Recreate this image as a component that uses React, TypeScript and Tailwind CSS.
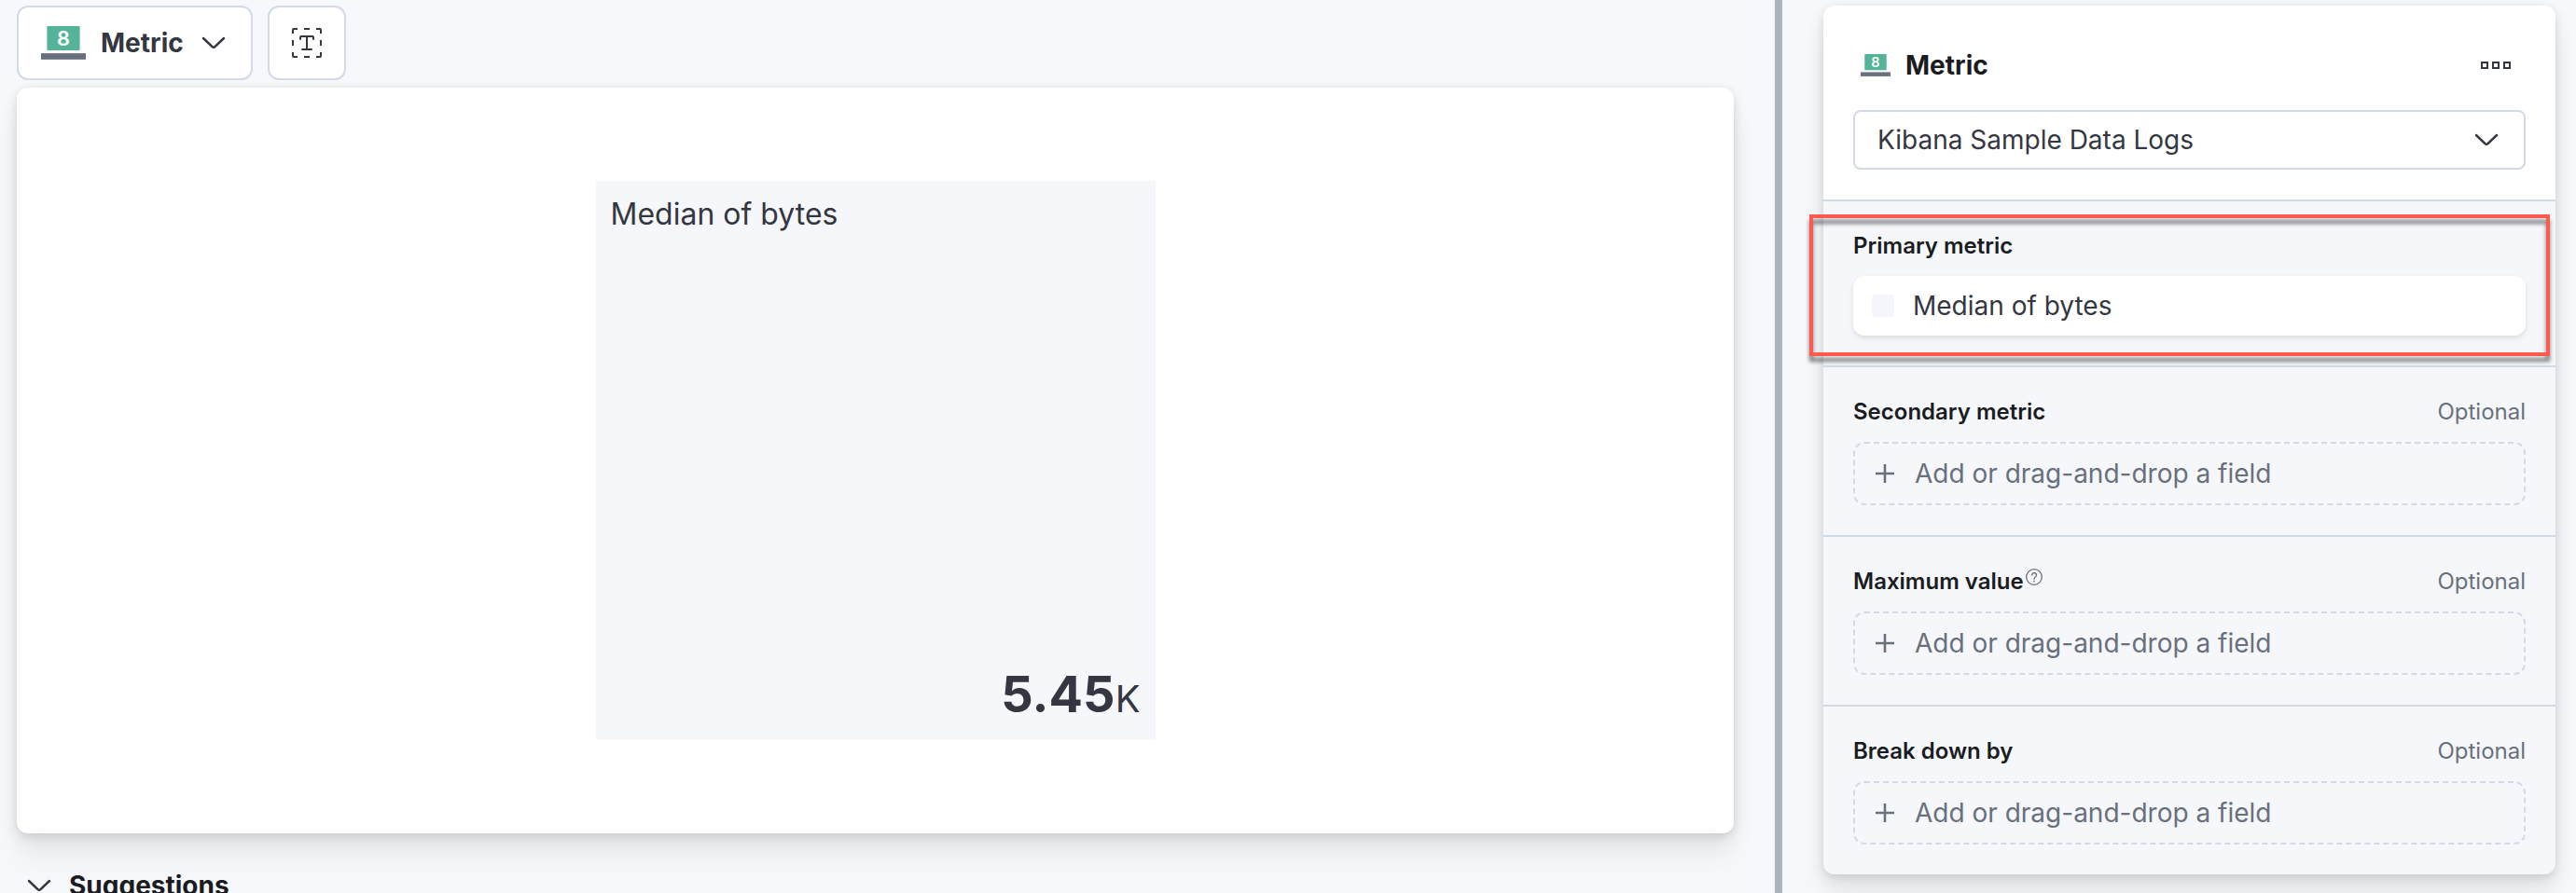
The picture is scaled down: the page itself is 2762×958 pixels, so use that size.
import React from 'react';

interface Dimension {
  title: string;
  field?: string;
  optional?: boolean;
  help?: boolean;
  highlighted?: boolean;
}

const dimensions: Dimension[] = [
  { title: 'Primary metric', field: 'Median of bytes', highlighted: true },
  { title: 'Secondary metric', optional: true },
  { title: 'Maximum value', optional: true, help: true },
  { title: 'Break down by', optional: true },
];

const PANEL_SHADOW =
  'shadow-[0_2px_8px_rgba(0,0,0,0.08),0_5px_16px_rgba(0,0,0,0.06),0_11px_24px_rgba(0,0,0,0.05),0_30px_30px_rgba(0,0,0,0.04)]';

function MetricIcon({ className }: { className: string }) {
  return (
    <svg viewBox="0 0 30 22.5" className={className} aria-hidden="true">
      <rect x="4" y="0" width="22" height="16.2" rx="0.4" fill="#54b399" />
      <rect x="0" y="18.2" width="30" height="4.2" fill="#69707d" />
      <text
        x="15"
        y="13"
        textAnchor="middle"
        fontFamily="Inter, sans-serif"
        fontSize="13.6"
        fontWeight="600"
        fill="#ffffff"
      >
        8
      </text>
    </svg>
  );
}

function ChevronIcon({ className = '' }: { className?: string }) {
  return (
    <svg
      viewBox="0 0 32 32"
      className={`size-8 shrink-0 ${className}`}
      fill="none"
      stroke="#343741"
      strokeWidth="2.5"
      strokeLinecap="round"
      strokeLinejoin="round"
      aria-hidden="true"
    >
      <path d="M5 11 L14.8 20.4 Q16 21.4 17.2 20.4 L27 11" />
    </svg>
  );
}

function TextSettingsIcon() {
  return (
    <svg viewBox="0 0 32 32" className="size-8" fill="none" stroke="#343741" strokeWidth="2" aria-hidden="true">
      <path d="M1 6V2a1 1 0 0 1 1-1h4M13 1h6M26 1h4a1 1 0 0 1 1 1v4M31 13v6M31 26v4a1 1 0 0 1-1 1h-4M19 31h-6M6 31H2a1 1 0 0 1-1-1v-4M1 19v-6" />
      <path d="M9 12v-2a1 1 0 0 1 1-1h12a1 1 0 0 1 1 1v2M16 9v14M11 23h10" strokeLinecap="round" />
    </svg>
  );
}

function HelpIcon() {
  return (
    <svg viewBox="0 0 18 18" className="size-[18px]" fill="none" stroke="#69707d" aria-hidden="true">
      <circle cx="9" cy="9" r="8.3" strokeWidth="1.3" />
      <path d="M6.7 7a2.4 2.4 0 1 1 3.7 2Q9 9.8 9 11.3" strokeWidth="1.4" strokeLinecap="round" />
      <circle cx="9" cy="13.6" r="0.9" fill="#69707d" stroke="none" />
    </svg>
  );
}

function DimensionGroup({ title, field, optional, help, highlighted }: Dimension) {
  return (
    <section className="relative border-t-2 border-[#d3dae6] px-8 pt-8 pb-8">
      <div className="mb-4 flex h-8 items-center justify-between text-2xl leading-8">
        <h3 className="flex items-center gap-0.5 font-semibold text-[#1a1c21]">
          {title}
          {help && (
            <span className="self-start pt-0.5">
              <HelpIcon />
            </span>
          )}
        </h3>
        {optional && <span className="text-[#69707d]">Optional</span>}
      </div>

      {field ? (
        <button
          type="button"
          className="flex h-16 w-full items-center gap-5 rounded-xl bg-white px-5 text-left text-[28px] leading-10 text-[#343741] shadow-[0_2px_4px_rgba(0,0,0,0.07),0_4px_8px_rgba(0,0,0,0.05)]"
        >
          <span className="size-6 rounded bg-[#f5f7fc]" />
          {field}
        </button>
      ) : (
        <button
          type="button"
          className="flex h-[68px] w-full items-center gap-[22px] rounded-xl border-2 border-dashed border-[#d3dae6] px-[22px] text-left text-[28px] leading-10 text-[#69707d]"
        >
          <svg viewBox="0 0 20 20" className="size-5" stroke="#69707d" strokeWidth="2.6" aria-hidden="true">
            <path d="M10 0v20M0 10h20" />
          </svg>
          Add or drag-and-drop a field
        </button>
      )}

      {highlighted && (
        <div className="pointer-events-none absolute -left-[15px] right-[6px] top-[14px] bottom-[10px] border-4 border-[#ff5a4a] drop-shadow-[0_6px_2px_rgba(0,0,0,0.5)]" />
      )}
    </section>
  );
}

export default function App() {
  return (
    <div className="grid h-screen grid-cols-[minmax(0,1fr)_8px_minmax(0,851px)] overflow-hidden bg-[#f7f8fc] font-['Inter',sans-serif] text-[#343741]">
      <main className="pt-1.5 pr-11 pl-[18px]">
        <div className="mb-2 flex gap-4">
          <button
            type="button"
            className="flex h-20 items-center rounded-xl border-2 border-[#d3dae6] bg-white px-6 text-[28px] leading-10 font-bold"
          >
            <MetricIcon className="mr-4 h-9 w-12" />
            Metric
            <ChevronIcon className="ml-4" />
          </button>
          <button
            type="button"
            aria-label="Text settings"
            className="flex h-20 w-[84px] items-center justify-center rounded-xl border-2 border-[#d3dae6] bg-white"
          >
            <TextSettingsIcon />
          </button>
        </div>

        <div className={`flex justify-center rounded-xl bg-white py-[100px] ${PANEL_SHADOW}`}>
          <div className="flex size-[600px] flex-col justify-between bg-[#f5f7fb] p-4">
            <h2 className="text-[32px] leading-10">Median of bytes</h2>
            <p className="text-right text-[54px] leading-[56px] font-bold">
              5.45<span className="text-[40px] font-normal">K</span>
            </p>
          </div>
        </div>

        <button
          type="button"
          className="mt-8 flex h-12 items-center gap-4 pl-2 text-[28px] leading-10 font-bold text-[#1a1c21]"
        >
          <ChevronIcon />
          Suggestions
        </button>
      </main>

      <div className="bg-[#adb3bd]" />

      <aside className="pt-1.5 pr-[22px] pl-11">
        <div className={`rounded-xl bg-[#f5f7fb] ${PANEL_SHADOW}`}>
          <header className="rounded-t-xl bg-white p-8">
            <div className="mb-4 flex h-16 items-center justify-between pr-4 pl-2">
              <h2 className="flex items-center gap-4 text-[28px] leading-10 font-bold text-[#1a1c21]">
                <MetricIcon className="h-6 w-8" />
                Metric
              </h2>
              <button type="button" aria-label="Layer actions">
                <svg viewBox="0 0 32 8" className="h-2 w-8" fill="none" stroke="#343741" strokeWidth="2">
                  <path d="M1 1h6v6H1zM13 1h6v6h-6zM25 1h6v6h-6z" />
                </svg>
              </button>
            </div>
            <div className="relative">
              <select
                aria-label="Data view"
                className="h-16 w-full appearance-none rounded-lg border-2 border-[#d3dae6] bg-white px-6 text-[28px] leading-10 text-[#343741]"
              >
                <option>Kibana Sample Data Logs</option>
              </select>
              <ChevronIcon className="pointer-events-none absolute top-4 right-[26px]" />
            </div>
          </header>

          {dimensions.map((dimension) => (
            <DimensionGroup key={dimension.title} {...dimension} />
          ))}
        </div>
      </aside>
    </div>
  );
}
